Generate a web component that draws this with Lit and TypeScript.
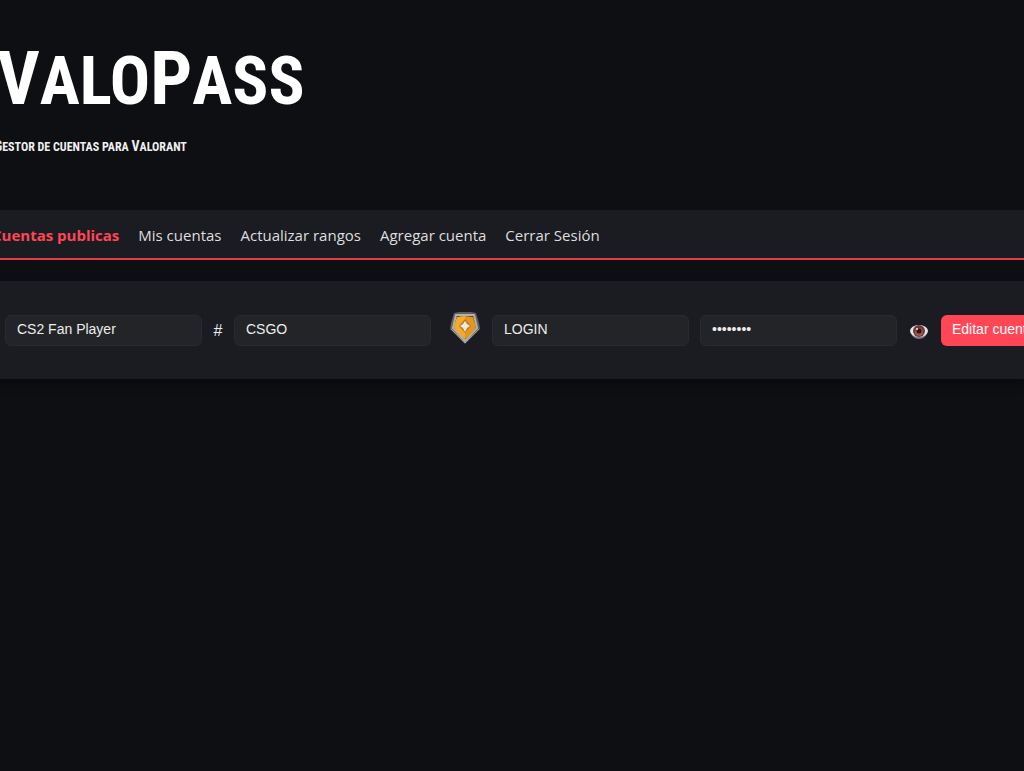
import { LitElement, html, css } from "lit";
import { customElement, state } from "lit/decorators.js";

@customElement("rank-badge")
class RankBadge extends LitElement {
  static styles = css`
    :host { display: block; flex: none; width: 34px; height: 36px; }
    svg { display: block; width: 100%; height: 100%; }
  `;
  render() {
    return html`<svg viewBox="0 0 34 36" role="img" aria-label="Rango">
      <path d="M6 3l5-1h12l5 1 3 10 1 6-4 4-11 11L6 23l-4-4 1-6z" fill="#606064" />
      <path d="M8 5h18l3 13-12 13L5 18z" fill="#38342f" stroke="#b5b2ac" stroke-width="2" stroke-linejoin="round" />
      <path d="M9 7l8-1 8 1 3 10-4 6-7 6-7-6-4-6z" fill="#e3971c" />
      <path d="M9 7l8-1v4l-6 6 6 7v6l-7-6-4-6z" fill="#f2ab2c" />
      <path d="M17 9l6 7-6 7-6-7z" fill="#b87a34" />
      <path d="M17 11l2 3 3 2-3 2-2 4-2-4-3-2 3-2z" fill="#f3e7dc" />
      <path d="M3 19l4 4 10 10 10-10 4-4" fill="none" stroke="#9b9a97" stroke-width="1" />
    </svg>`;
  }
}

@customElement("account-row")
class AccountRow extends LitElement {
  @state() private visible = false;

  static styles = css`
    :host { display: block; }
    .row {
      display: flex;
      align-items: center;
      padding: 29px 0 28px 13px;
      background: #1b1c21;
      box-shadow: 0 4px 10px rgba(0, 0, 0, 0.4);
      color: #ececec;
      font: 14px/18px "Liberation Sans", Arial, sans-serif;
      white-space: nowrap;
    }
    .field {
      box-sizing: border-box;
      flex: none;
      width: 197px;
      height: 31px;
      padding: 4px 11px 7px;
      border: 1px solid #292a2e;
      border-radius: 6px;
      background: #232428;
      color: #ececec;
      font: inherit;
    }
    .hash { flex: none; width: 32px; text-align: center; font-size: 16px; }
    .rank { margin: 0 10px 5px 17px; }
    .secret { margin-left: 11px; }
    .eye {
      flex: none;
      width: 20px;
      height: 16px;
      margin: 0 12px;
      padding: 0;
      border: 0;
      background: none;
      cursor: pointer;
    }
    .eye svg { display: block; width: 20px; height: 16px; }
    .edit {
      flex: none;
      height: 31px;
      padding: 0 11px 3px;
      border: 0;
      border-radius: 6px;
      background: #ff4655;
      color: #fff;
      font: inherit;
      cursor: pointer;
    }
  `;

  render() {
    return html`<div class="row">
      <input class="field" aria-label="Nombre" .value=${"CS2 Fan Player"} />
      <span class="hash">#</span>
      <input class="field" aria-label="Tag" .value=${"CSGO"} />
      <rank-badge class="rank"></rank-badge>
      <input class="field" aria-label="Usuario" .value=${"LOGIN"} />
      <input class="field secret" aria-label="Contraseña"
        type=${this.visible ? "text" : "password"} .value=${"password"} />
      <button class="eye" aria-label="Mostrar contraseña" @click=${() => (this.visible = !this.visible)}>
        <svg viewBox="0 0 20 16">
          <ellipse cx="10" cy="9" rx="8" ry="7" fill="#83748c" />
          <ellipse cx="10" cy="8" rx="9" ry="6" fill="#e9e4ea" />
          <circle cx="10" cy="8" r="6" fill="#6f3a38" />
          <circle cx="10" cy="9" r="4" fill="#9a5750" />
          <circle cx="10" cy="8" r="2.500" fill="#2a1519" />
          <circle cx="8" cy="6" r="1" fill="#f4e6ea" />
        </svg>
      </button>
      <button class="edit">Editar cuenta</button>
    </div>`;
  }
}

@customElement("app-root")
class AppRoot extends LitElement {
  static styles = css`
    :host {
      display: block;
      min-height: 100vh;
      overflow: hidden;
      background: #0e0f13;
      color: #fff;
      font-family: "Open Sans", "Noto Sans", sans-serif;
    }
    .page { margin-left: -8px; }
    .top {
      box-sizing: border-box;
      height: 210px;
      padding: 41px 0 0 5px;
      font-family: "Roboto Condensed", Roboto, sans-serif;
      font-weight: 700;
      white-space: nowrap;
    }
    .title { margin: 0; font-size: 74px; line-height: 76px; }
    .title .small { font-size: 67px; text-transform: uppercase; }
    .tagline {
      margin: 18px 0 0 -3px;
      font-size: 14px;
      line-height: 18px;
      color: #f0f0f0;
    }
    .tagline .small { font-size: 12px; text-transform: uppercase; }
    .nav {
      display: flex;
      gap: 19px;
      padding: 13px 0 11px;
      border-bottom: 2px solid #e33c49;
      background: #1b1c21;
      font-size: 15px;
      line-height: 24px;
      white-space: nowrap;
    }
    .link { color: #dedede; text-decoration: none; }
    .active { color: #ff4655; font-weight: 700; }
    .list { margin-top: 21px; }
  `;

  private links = ["Cuentas publicas", "Mis cuentas", "Actualizar rangos", "Agregar cuenta", "Cerrar Sesión"];

  render() {
    return html`<div class="page">
      <header class="top">
        <h1 class="title">V<span class="small">alo</span>P<span class="small">ass</span></h1>
        <p class="tagline">G<span class="small">estor de cuentas para </span>V<span class="small">alorant</span></p>
      </header>
      <nav class="nav">
        ${this.links.map((t, i) => html`<a href="#" class="link ${i === 0 ? "active" : ""}">${t}</a>`)}
      </nav>
      <main class="list"><account-row></account-row></main>
    </div>`;
  }
}
